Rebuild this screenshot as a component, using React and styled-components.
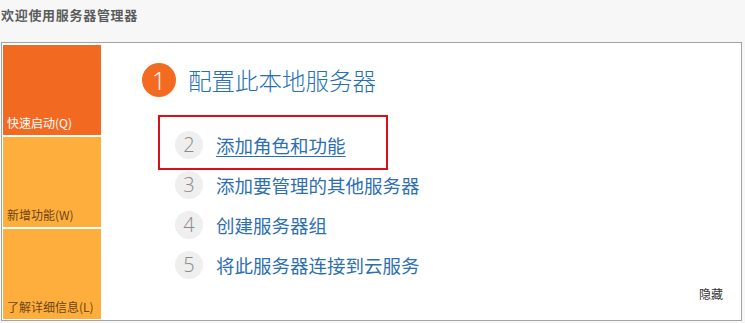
import React from "react";
import styled, { createGlobalStyle } from "styled-components";

const GlobalStyle = createGlobalStyle`
  html, body {
    margin: 0;
    padding: 0;
    background: #f7f7f7;
  }
  body {
    font-family: "Noto Sans CJK SC", "Noto Sans", sans-serif;
  }
`;

const Page = styled.div`
  width: 745px;
  height: 323px;
  overflow: hidden;
`;

const Title = styled.div`
  height: 42px;
  box-sizing: border-box;
  padding: 5px 0 0 1px;
  font-size: 13px;
  font-weight: bold;
  letter-spacing: 0.7px;
  color: #5c5c5c;
  line-height: 20px;
`;

const Panel = styled.div`
  margin-left: 1px;
  width: 741px;
  height: 279px;
  box-sizing: border-box;
  border: 1px solid #a2a2a2;
  background: #fff;
  display: flex;
  padding: 2px 0 0 1px;
`;

const Sidebar = styled.div`
  width: 98px;
  display: flex;
  flex-direction: column;
  gap: 2px;
`;

const Tile = styled.div`
  height: 90px;
  background: ${(p) => p.$bg};
  color: ${(p) => p.$fg};
  font-size: 12px;
  display: flex;
  align-items: flex-end;
  box-sizing: border-box;
  padding: 0 0 4px 4px;
  line-height: 17px;
`;

const Content = styled.div`
  flex: 1;
  display: flex;
  flex-direction: column;
  padding: 18px 18px 19px 0;
`;

const Heading = styled.div`
  display: flex;
  align-items: center;
  gap: 12px;
  margin-left: 41px;
`;

const BigBadge = styled.div`
  width: 34px;
  height: 34px;
  border-radius: 50%;
  background: #f26b21;
  color: #fff;
  font-family: "Open Sans", sans-serif;
  font-weight: 300;
  font-size: 25px;
  display: flex;
  align-items: center;
  justify-content: center;
  line-height: 1;
`;

const HeadingText = styled.div`
  font-size: 23.5px;
  font-weight: 300;
  color: #2670b6;
  line-height: 34px;
`;

const Steps = styled.div`
  margin: 28px 0 0 74px;
  display: flex;
  flex-direction: column;
`;

const Step = styled.div`
  position: relative;
  height: 40px;
  display: flex;
  align-items: center;
  gap: 13px;
`;

const SmallBadge = styled.div`
  width: 28px;
  height: 28px;
  border-radius: 50%;
  background: #efefef;
  color: #8a8a8a;
  font-family: "Open Sans", sans-serif;
  font-weight: 300;
  font-size: 20px;
  display: flex;
  align-items: center;
  justify-content: center;
  line-height: 1;
`;

const StepText = styled.span`
  font-size: 18.5px;
  color: #2e6fb0;
  text-decoration: ${(p) => (p.$link ? "underline" : "none")};
  text-underline-offset: 3px;
  text-decoration-thickness: 1px;
  line-height: 26px;
`;

const Highlight = styled.div`
  position: absolute;
  left: -17px;
  top: -10px;
  width: 230px;
  height: 55px;
  box-sizing: border-box;
  border: 2px solid #d7101a;
  pointer-events: none;
`;

const Footer = styled.div`
  margin-top: auto;
  align-self: flex-end;
  font-size: 12px;
  color: #333;
  line-height: 17px;
`;

const tiles = [
  { label: "快速启动(Q)", bg: "#f26a21", fg: "#fff" },
  { label: "新增功能(W)", bg: "#feae3c", fg: "#6f4416" },
  { label: "了解详细信息(L)", bg: "#feae3c", fg: "#6f4416" },
];

const steps = [
  { n: 2, text: "添加角色和功能", link: true, marked: true },
  { n: 3, text: "添加要管理的其他服务器" },
  { n: 4, text: "创建服务器组" },
  { n: 5, text: "将此服务器连接到云服务" },
];

export default function App() {
  return (
    <Page>
      <GlobalStyle />
      <Title>欢迎使用服务器管理器</Title>
      <Panel>
        <Sidebar>
          {tiles.map((t) => (
            <Tile key={t.label} $bg={t.bg} $fg={t.fg}>
              {t.label}
            </Tile>
          ))}
        </Sidebar>
        <Content>
          <Heading>
            <BigBadge>1</BigBadge>
            <HeadingText>配置此本地服务器</HeadingText>
          </Heading>
          <Steps>
            {steps.map((s) => (
              <Step key={s.n}>
                <SmallBadge>{s.n}</SmallBadge>
                <StepText $link={s.link}>{s.text}</StepText>
                {s.marked && <Highlight />}
              </Step>
            ))}
          </Steps>
          <Footer>隐藏</Footer>
        </Content>
      </Panel>
    </Page>
  );
}
